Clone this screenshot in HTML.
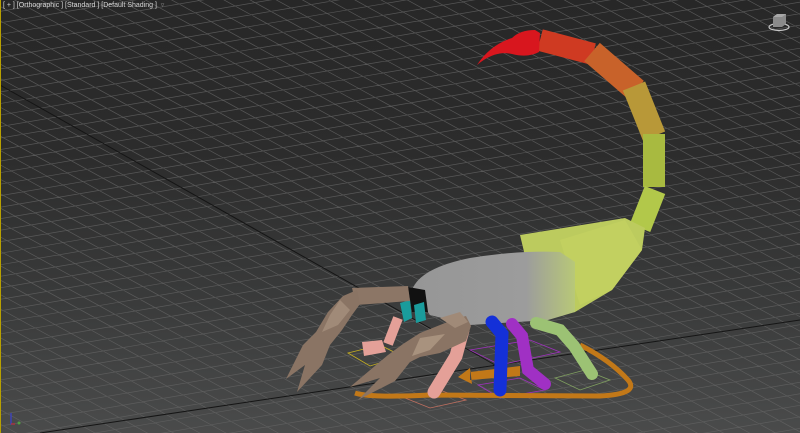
<!DOCTYPE html>
<html><head><meta charset="utf-8"><style>
html,body{margin:0;padding:0;width:800px;height:433px;overflow:hidden;background:#2b2b2b}
#v{position:absolute;left:0;top:0;width:800px;height:433px;background:linear-gradient(#272727 0%,#2c2c2c 35%,#3a3b3b 70%,#4a4b4b 100%)}
#hdr{position:absolute;left:3px;top:1px;font:7px/9px "Liberation Sans",sans-serif;color:#d8d8d8;white-space:nowrap}
#bd{position:absolute;left:0;top:0;width:1px;height:433px;background:#b8a000}
svg{display:block;overflow:hidden}
</style></head><body>
<div id="v"></div>
<svg id="s" width="800" height="433" viewBox="0 0 800 433" style="position:absolute;left:0;top:0">
<g id="grid" stroke="#636363" stroke-width="0.7" fill="none" opacity="0.8"></g>
<line x1="0" y1="85" x2="495" y2="365" stroke="#151515" stroke-width="1"/>
<line x1="40" y1="433" x2="800" y2="320" stroke="#151515" stroke-width="1"/>
<g fill="none" stroke-width="0.8">
<path d="M348 353 L380 345 L402 356 L370 366 Z" stroke="#c8b020"/>
<path d="M405 398 L440 390 L466 400 L430 408 Z" stroke="#c07060"/>
<path d="M470 350 L530 340 L560 352 L500 365 Z" stroke="#a030c0"/>
<path d="M478 385 L520 378 L545 390 L500 398 Z" stroke="#a030c0"/>
<path d="M555 378 L585 370 L610 380 L580 390 Z" stroke="#80a060"/>
</g>
<path d="M355 393 Q370 398 430 395 L600 396 Q640 394 628 380 Q610 360 580 345" stroke="#c27818" stroke-width="5" fill="none"/>
<path d="M470 372 L520 366 L520 376 L470 380 Z M470 368 L458 377 L472 384 Z" fill="#c27818"/>
<g stroke-linecap="butt" fill="none">
<path d="M540 40 L593 54" stroke="#cf3a22" stroke-width="22"/>
<path d="M592 52 L636 90" stroke="#c8622a" stroke-width="24"/>
<path d="M634 86 L654 136" stroke="#b89838" stroke-width="24"/>
<path d="M654 134 L654 187" stroke="#a8ba40" stroke-width="22"/>
<path d="M655 190 L640 228" stroke="#b2c84a" stroke-width="22"/>
</g>
<path d="M520 235 L625 218 L645 228 L642 250 L612 290 L575 312 L540 318 Z" fill="#bccb5e"/>
<path d="M560 240 L625 220 L642 250 L612 290 L580 305 Z" fill="#c2d060"/>
<path d="M477 65 Q490 45 512 38 Q520 30 535 30 L540 33 L539 52 Q528 58 512 54 Q495 50 477 65 Z" fill="#d8161e"/>
<defs><linearGradient id="bg" x1="0" x2="1"><stop offset="0" stop-color="#969696"/><stop offset="0.7" stop-color="#9c9c9c"/><stop offset="1" stop-color="#b8c878"/></linearGradient></defs>
<path d="M412 290 Q420 268 470 258 Q520 250 560 252 L575 262 L575 312 L548 320 L470 325 L430 315 Z" fill="url(#bg)"/>
<path d="M408 287 L425 290 L428 312 L412 312 Z" fill="#111"/>
<path d="M400 303 L410 300 L412 318 L404 322 Z M414 305 L424 302 L426 320 L416 323 Z" fill="#1a9c9c"/>
<path d="M362 342 L382 340 L386 352 L364 356 Z" fill="#e4a098"/>
<path d="M398 318 L388 344" stroke="#e4a098" stroke-width="10"/>
<path d="M463 330 L456 356 L434 392" stroke="#e4a098" stroke-width="13" stroke-linecap="round" fill="none"/>
<path d="M492 322 L502 334 L500 390" stroke="#1430d8" stroke-width="13" stroke-linecap="round" fill="none"/>
<path d="M512 324 L522 336 L528 370 L545 384" stroke="#a030c4" stroke-width="12" stroke-linecap="round" fill="none"/>
<path d="M536 323 L560 330 L574 346 L592 374" stroke="#9cc274" stroke-width="12" stroke-linecap="round" fill="none"/>
<path d="M352 288 L408 286 L410 301 L356 305 Z" fill="#8c7666"/>
<path d="M357 290 L343 296 L328 312 L316 332 L303 345 L286 379 L305 365 L297 392 L322 365 L330 345 L342 330 L352 315 L360 304 Z" fill="#8a7464"/>
<path d="M340 300 L330 315 L322 332 L338 325 L350 310 Z" fill="#a08a78"/>
<path d="M466 316 L455 319 L420 333 L403 344 L388 355 L350 387 L380 378 L358 400 L395 381 L410 362 L420 357 L440 353 L466 341 L471 326 Z" fill="#8a7464"/>
<path d="M440 318 L460 312 L468 322 L455 328 Z" fill="#a08a78"/>
<path d="M420 338 L445 334 L430 350 L412 356 Z" fill="#a8927e"/>
<ellipse cx="779" cy="27" rx="10" ry="3.5" fill="none" stroke="#c8c8c8" stroke-width="1.2"/>
<path d="M773 17 L777 14 L786 14 L786 24 L782 27 L773 27 Z" fill="#8a8a8a"/>
<path d="M773 17 L777 14 L786 14 L782 17 Z" fill="#a8a8a8"/>
<path d="M11 413 L11 424 L14 424" stroke="#3a40d0" stroke-width="1.2" fill="none"/>
<path d="M11 424 L15 424" stroke="#c03030" stroke-width="1.2"/>
<circle cx="19" cy="423" r="1.5" fill="#50a040"/>
</svg>
<div id="bd"></div>
<div id="hdr">[ + ] [Orthographic ] [Standard ] [Default Shading ]&nbsp;&nbsp;<span style="color:#888">▿</span></div>
<script>
(function(){
var O=[495,365],a=[16,8.8],b=[20,-3.4],d='';
function P(u,v){return [O[0]+u*a[0]+v*b[0],O[1]+u*a[1]+v*b[1]];}
for(var u=-60;u<=60;u++){var p=P(u,-80),q=P(u,80);d+='M'+p[0].toFixed(1)+' '+p[1].toFixed(1)+'L'+q[0].toFixed(1)+' '+q[1].toFixed(1);}
for(var v=-80;v<=80;v++){var p=P(-60,v),q=P(60,v);d+='M'+p[0].toFixed(1)+' '+p[1].toFixed(1)+'L'+q[0].toFixed(1)+' '+q[1].toFixed(1);}
var pth=document.createElementNS('http://www.w3.org/2000/svg','path');pth.setAttribute('d',d);document.getElementById('grid').appendChild(pth);
})();
</script>
</body></html>
